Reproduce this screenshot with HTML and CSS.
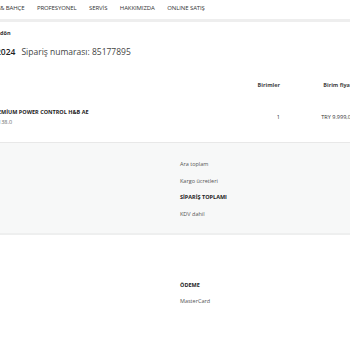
FILE: index.html
```html
<!DOCTYPE html>
<html lang="tr">
<head>
  <meta charset="UTF-8" />
  <meta name="viewport" content="width=device-width, initial-scale=1.0"/>
  <title>Sipariş</title>
  <link rel="stylesheet" href="styles.css">
</head>
<body>

<nav class="topnav">
  <a>&amp; BAHÇE</a>
  <a>PROFESYONEL</a>
  <a>SERVİS</a>
  <a>HAKKIMIZDA</a>
  <a>ONLINE SATIŞ</a>
</nav>

<div class="back">dön</div>

<h1 class="order-title"><b>2024</b><span>Sipariş numarası: 85177895</span></h1>

<div class="items">
  <div class="row head">
    <div></div>
    <div class="num">Birimler</div>
    <div class="num">Birim fiyatı</div>
  </div>
  <div class="row item">
    <div class="prod">
      <strong>EMİUM POWER CONTROL H&amp;B AE</strong>
      <span>138.0</span>
    </div>
    <div class="num">1</div>
    <div class="num">TRY 9.999,00</div>
  </div>
</div>

<div class="summary">
  <div class="col">
    <p>Ara toplam</p>
    <p>Kargo ücretleri</p>
    <p class="total">SİPARİŞ TOPLAMI</p>
    <p>KDV dahil</p>
  </div>
</div>

<div class="payment">
  <div class="col">
    <p class="total">ÖDEME</p>
    <p>MasterCard</p>
  </div>
</div>

</body>
</html>
```

FILE: styles.css
```css
html, body { overflow: hidden; }
body { font-family: "Open Sans", "Noto Sans", sans-serif; margin: 0; background: white; color: #333; width: 354px; }

.topnav { display: flex; gap: 12.5px; padding: 4px 0 0 0; height: 15px; border-bottom: 3px solid #eeeeee; }
.topnav a { font-size: 6px; color: #333; letter-spacing: -0.1px; }

.back { font-size: 5.5px; font-weight: bold; margin-top: 7px; height: 10px; }

.order-title { font-size: 8.5px; font-weight: normal; margin: 7px 0 0 -4px; display: flex; gap: 6px; color: #444; }
.order-title b { font-weight: 600; color: #222; }

.items { margin-top: 24px; border-bottom: 1px solid #e8e8e8; }
.row { display: grid; grid-template-columns: 1fr 40px 74px; align-items: center; font-size: 5.5px; }
.num { text-align: right; }
.head { font-weight: bold; color: #444; }
.item { padding: 19px 0 16px; }
.prod { display: flex; flex-direction: column; gap: 2px; margin-left: -2px; }
.prod strong { color: #222; }
.prod span { color: #666; }

.summary { background: #f7f8f8; border-bottom: 2px solid #eeefef; padding: 18px 0 16px; }
.col { margin-left: 180px; font-size: 5.5px; color: #555; }
.col p { margin: 0 0 10.5px; line-height: 6px; }
.col p:last-child { margin-bottom: 0; }
.col .total { font-weight: bold; color: #222; }

.payment { padding: 47px 0; }
.payment .col p { margin-bottom: 10px; }
```
